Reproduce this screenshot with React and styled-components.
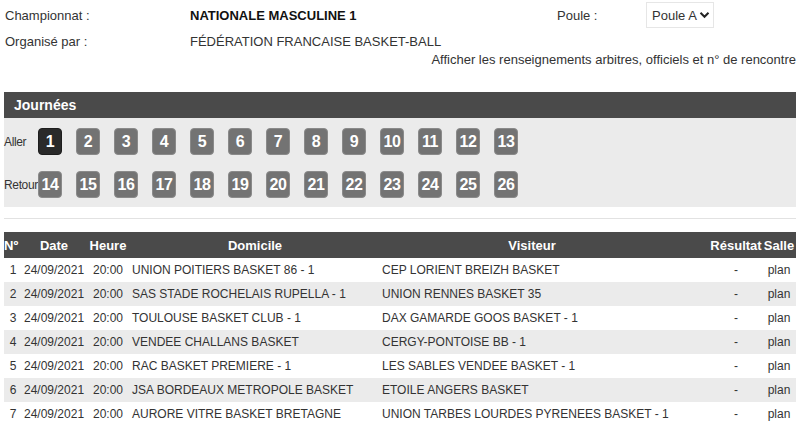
import React from 'react';
import styled, { createGlobalStyle } from 'styled-components';

const GlobalStyle = createGlobalStyle`
  html, body {
    margin: 0;
    padding: 0;
    background: #fff;
  }
  body {
    font-family: "Liberation Sans", Arial, sans-serif;
    color: #333;
    font-size: 13px;
  }
`;

const Page = styled.div`
  width: 800px;
  height: 431px;
  overflow: hidden;
  padding: 0 4px;
  box-sizing: border-box;
`;

const Info = styled.div`
  display: grid;
  grid-template-columns: 185px 367px 89px auto;
  align-items: center;
  padding-left: 1px;
`;

const Cell = styled.div`
  height: ${(p) => p.h || 26}px;
  display: flex;
  align-items: center;
  font-weight: ${(p) => (p.bold ? 'bold' : 'normal')};
  color: ${(p) => (p.bold ? '#111' : '#333')};
`;

const Select = styled.div`
  width: 68px;
  height: 26px;
  box-sizing: border-box;
  border: 1px solid #e6e6e6;
  display: flex;
  align-items: center;
  justify-content: space-between;
  padding: 0 3px 0 5px;
  color: #333;
  font-size: 13px;
`;

const Afficher = styled.div`
  text-align: right;
  height: 20px;
  line-height: 16px;
  color: #333;
`;

const Panel = styled.section`
  margin-top: 20px;
`;

const PanelHead = styled.div`
  background: #4a4a4a;
  color: #fff;
  font-weight: bold;
  font-size: 14px;
  height: 26px;
  display: flex;
  align-items: center;
  padding-left: 10px;
`;

const PanelBody = styled.div`
  background: #ebebeb;
  padding: 10px 0 9px;
  display: flex;
  flex-direction: column;
  gap: 16px;
`;

const DayRow = styled.div`
  display: flex;
  align-items: center;
`;

const DayLabel = styled.span`
  width: 34px;
  font-size: 12px;
  letter-spacing: -0.35px;
  color: #333;
  white-space: nowrap;
`;

const Days = styled.div`
  display: flex;
  gap: 14px;
`;

const Day = styled.button`
  width: 24px;
  height: 27px;
  border: 1px solid ${(p) => (p.active ? '#1e1e1e' : '#8a8a8a')};
  border-radius: 4px;
  background: ${(p) => (p.active ? '#2a2a2a' : '#737373')};
  color: #fff;
  font-family: "Liberation Sans", Arial, sans-serif;
  font-weight: bold;
  font-size: 16px;
  letter-spacing: -0.5px;
  padding: 0;
  display: flex;
  align-items: center;
  justify-content: center;
  cursor: pointer;
`;

const Rule = styled.hr`
  border: 0;
  border-top: 1px solid #e2e2e2;
  margin: 11px 0 13px;
`;

const Table = styled.table`
  width: 100%;
  border-collapse: collapse;
  table-layout: fixed;
  font-size: 12px;
`;

const Th = styled.th`
  background: #4a4a4a;
  color: #fff;
  font-size: 13px;
  font-weight: bold;
  height: 26px;
  padding: 0 ${(p) => p.pr || 0}px 0 ${(p) => p.pl || 0}px;
  text-align: ${(p) => p.align || 'center'};
  white-space: nowrap;
`;

const Tr = styled.tr`
  background: ${(p) => (p.even ? '#ebebeb' : '#fff')};
`;

const Td = styled.td`
  height: 24px;
  padding: 0 2px;
  text-align: ${(p) => p.align || 'left'};
  white-space: nowrap;
  overflow: hidden;
  color: #333;
`;

const Chevron = () => (
  <svg width="11" height="8" viewBox="0 0 11 8">
    <path d="M1.5 1.8 L5.5 5.8 L9.5 1.8" fill="none" stroke="#222" strokeWidth="2" />
  </svg>
);

const matches = [
  ['UNION POITIERS BASKET 86 - 1', 'CEP LORIENT BREIZH BASKET'],
  ['SAS STADE ROCHELAIS RUPELLA - 1', 'UNION RENNES BASKET 35'],
  ['TOULOUSE BASKET CLUB - 1', 'DAX GAMARDE GOOS BASKET - 1'],
  ['VENDEE CHALLANS BASKET', 'CERGY-PONTOISE BB - 1'],
  ['RAC BASKET PREMIERE - 1', 'LES SABLES VENDEE BASKET - 1'],
  ['JSA BORDEAUX METROPOLE BASKET', 'ETOILE ANGERS BASKET'],
  ['AURORE VITRE BASKET BRETAGNE', 'UNION TARBES LOURDES PYRENEES BASKET - 1'],
];

const aller = Array.from({ length: 13 }, (_, i) => i + 1);
const retour = Array.from({ length: 13 }, (_, i) => i + 14);

export default function App() {
  return (
    <Page>
      <GlobalStyle />
      <Info>
        <Cell h={30}>Championnat :</Cell>
        <Cell h={30} bold>NATIONALE MASCULINE 1</Cell>
        <Cell h={30}>Poule :</Cell>
        <Cell h={30}>
          <Select>
            Poule A <Chevron />
          </Select>
        </Cell>
        <Cell h={22}>Organisé par :</Cell>
        <Cell h={22}>FÉDÉRATION FRANCAISE BASKET-BALL</Cell>
        <Cell h={22} />
        <Cell h={22} />
      </Info>
      <Afficher>Afficher les renseignements arbitres, officiels et n° de rencontre</Afficher>

      <Panel>
        <PanelHead>Journées</PanelHead>
        <PanelBody>
          <DayRow>
            <DayLabel>Aller</DayLabel>
            <Days>
              {aller.map((n) => (
                <Day key={n} active={n === 1}>{n}</Day>
              ))}
            </Days>
          </DayRow>
          <DayRow>
            <DayLabel>Retour</DayLabel>
            <Days>
              {retour.map((n) => (
                <Day key={n}>{n}</Day>
              ))}
            </Days>
          </DayRow>
        </PanelBody>
      </Panel>

      <Rule />

      <Table>
        <colgroup>
          <col style={{ width: 18 }} />
          <col style={{ width: 64 }} />
          <col style={{ width: 44 }} />
          <col style={{ width: 250 }} />
          <col style={{ width: 330 }} />
          <col style={{ width: 52 }} />
          <col style={{ width: 34 }} />
        </colgroup>
        <thead>
          <tr>
            <Th align="left">Nº</Th>
            <Th>Date</Th>
            <Th>Heure</Th>
            <Th>Domicile</Th>
            <Th pr={26}>Visiteur</Th>
            <Th>Résultat</Th>
            <Th>Salle</Th>
          </tr>
        </thead>
        <tbody>
          {matches.map(([home, away], i) => (
            <Tr key={i} even={i % 2 === 1}>
              <Td align="center">{i + 1}</Td>
              <Td align="center">24/09/2021</Td>
              <Td align="center">20:00</Td>
              <Td>{home}</Td>
              <Td>{away}</Td>
              <Td align="center">-</Td>
              <Td align="center">plan</Td>
            </Tr>
          ))}
        </tbody>
      </Table>
    </Page>
  );
}
